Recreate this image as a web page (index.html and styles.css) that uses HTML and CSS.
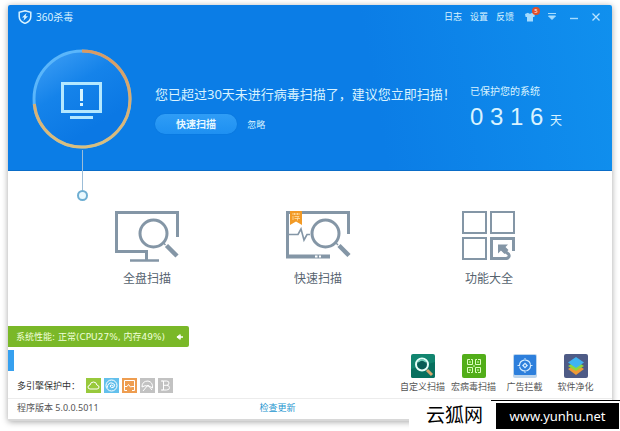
FILE: index.html
```html
<!DOCTYPE html>
<html lang="zh-CN">
  <head>
    <meta charset="UTF-8" />
    <meta name="viewport" content="width=device-width, initial-scale=1.0" />
    <title>360杀毒</title>
    <link rel="stylesheet" href="styles.css">
  </head>
  <body>
    <div class="window">
      <header class="hero">
        <div class="titlebar">
          <svg class="logo" viewBox="0 0 14 14" fill="none">
            <path d="M7 .8 L12.8 2.4 V6.5 C12.8 10 10 12.3 7 13.4 C4 12.3 1.2 10 1.2 6.5 V2.4 Z" stroke="#d9f3ff" stroke-width="1.5" />
            <path d="M8.6 3 L4 7.4 H6.4 L5.4 10.8 L10 6.2 H7.6 Z" fill="#d9f3ff" />
          </svg>
          <h1>360杀毒</h1>
          <nav class="top-links">
            <a href="#">日志</a>
            <a href="#">设置</a>
            <a href="#">反馈</a>
          </nav>
          <div class="win-btns">
            <button aria-label="换肤">
              <svg viewBox="0 0 12 12"><path d="M1 3 L4 1.8 Q6 3.6 8 1.8 L11 3 L10.4 6 H9 V10.5 H3 V6 H1.6 Z" fill="#a5dcff" /></svg>
              <span class="badge">5</span>
            </button>
            <button aria-label="菜单">
              <svg viewBox="0 0 12 12"><path d="M2 2.5 H10 M2.5 5 H9.5 L6 8.5 Z" fill="#a5dcff" stroke="#a5dcff" /></svg>
            </button>
            <button aria-label="最小化">
              <svg viewBox="0 0 12 12"><path d="M2 7.5 H10" stroke="#a5dcff" stroke-width="1.4" /></svg>
            </button>
            <button aria-label="关闭">
              <svg viewBox="0 0 12 12"><path d="M2.5 2.5 L9.5 9.5 M9.5 2.5 L2.5 9.5" stroke="#b9e4ff" stroke-width="1.3" /></svg>
            </button>
          </div>
        </div>

        <div class="status">
          <div class="ring">
            <svg viewBox="0 0 100 100" fill="none">
              <defs>
                <linearGradient id="glass" x1="0.1" y1="0" x2="0.6" y2="0.8">
                  <stop offset="0" stop-color="#3f9ff5" />
                  <stop offset="0.5" stop-color="#1583ea" />
                  <stop offset="1" stop-color="#0b78e4" />
                </linearGradient>
                <linearGradient id="arc" x1="0" y1="0" x2="0" y2="1">
                  <stop offset="0" stop-color="#d99a63" />
                  <stop offset="1" stop-color="#d8bf80" />
                </linearGradient>
              </defs>
              <circle cx="50" cy="50" r="49" fill="url(#glass)" stroke="#0c6cc9" />
              <circle cx="50" cy="50" r="48" stroke="#5ab6fb" stroke-width="3" />
              <path d="M50 2 A48 48 0 1 1 2.3 55" stroke="url(#arc)" stroke-width="3" />
              <rect x="30.5" y="34.5" width="38" height="28" stroke="#b4e8ff" stroke-width="3" />
              <path d="M38 68.5 H61" stroke="#b4e8ff" stroke-width="3" />
              <path d="M49.5 40 V52 M49.5 54 V57" stroke="#d6f4ff" stroke-width="3" />
            </svg>
            <span class="pin"></span>
          </div>

          <div class="message">
            <p>您已超过30天未进行病毒扫描了，建议您立即扫描！</p>
            <button class="scan-btn">快速扫描</button>
            <a class="ignore" href="#">忽略</a>
          </div>

          <div class="days">
            <p>已保护您的系统</p>
            <div class="counter">
              <span>0</span><span>3</span><span>1</span><span>6</span>
              <em>天</em>
            </div>
          </div>
        </div>
      </header>

      <main class="tools">
        <a class="tool" href="#">
          <svg viewBox="0 0 66 54" fill="none" stroke="#8496a6">
            <path d="M63.5 28 V3.5 H2.5 V42.5 H32.5 V51" stroke-width="3" />
            <path d="M16 51.5 H45" stroke-width="2.5" />
            <circle cx="39.5" cy="24.5" r="13.5" stroke-width="3" />
            <path d="M49.5 34 L51.5 36" stroke-width="1.5" />
            <path d="M52.5 36.5 L63 47" stroke-width="4.5" />
          </svg>
          <span>全盘扫描</span>
        </a>
        <a class="tool" href="#">
          <svg viewBox="0 0 66 54" fill="none" stroke="#8496a6">
            <path d="M63.5 25 V3.5 H2.5 V48" stroke-width="3" />
            <path d="M1 47.5 H45" stroke-width="4" />
            <path d="M30 47.5 H32.5 M34 47.5 H36" stroke="#fff" stroke-width="2" />
            <path d="M3 25.5 H13 L16 20 L19 31 L22 25.5 H25" stroke-width="1.6" />
            <circle cx="40.5" cy="24.5" r="13.5" stroke-width="3" />
            <path d="M51 34 L53 36" stroke-width="1.5" />
            <path d="M54 36.5 L64 46.5" stroke-width="4.5" />
            <path d="M5 2 H17 V16 L11 12.5 L5 16 Z" fill="#f29a26" stroke="none" />
            <path d="M7 5 H15 M9.5 4 V6 M12.5 4 V6 M8 7 V11 M9.5 7.5 H14 L12.5 9 V11.5 M9.5 9.5 H15" stroke="#ffe0a8" stroke-width=".8" />
          </svg>
          <span>快速扫描</span>
        </a>
        <a class="tool" href="#">
          <svg viewBox="0 0 66 54" fill="none" stroke="#8496a6">
            <rect x="7" y="3" width="23" height="21" stroke-width="2" />
            <rect x="35" y="3" width="23" height="21" stroke-width="2" />
            <rect x="7" y="29" width="23" height="21" stroke-width="2" />
            <path d="M57.5 42 V29.5 H35.5 V49.5 H51" stroke-width="3" />
            <path d="M46 40 L52.5 45 Q54.5 48 50.5 49.5" stroke-width="3" />
            <path d="M42 35.5 H52 L49.5 38 L52.5 41 L48.5 45 L45 41.5 L42 44.5 Z" fill="#8496a6" stroke="none" />
          </svg>
          <span>功能大全</span>
        </a>
      </main>

      <section class="bottom">
        <div class="left">
          <div class="perf">
            <span>系统性能: 正常(CPU27%, 内存49%)</span>
            <svg viewBox="0 0 8 8"><path d="M1 4 H7 M4 1.5 V6.5" stroke="#fff" stroke-width="1.5" /><path d="M.5 4 L3.5 1.5 V6.5 Z" fill="#fff" /></svg>
          </div>
          <div class="tab"></div>
          <div class="engines">
            <span>多引擎保护中：</span>
            <svg class="green" viewBox="0 0 15 15"><path d="M4 11 Q2 11 2 9 Q2 7.5 4 7 Q4.5 4 7.5 4 Q10.5 4 10.8 7 Q13 7.5 13 9 Q13 11 11 11 Z" /></svg>
            <svg class="blue" viewBox="0 0 15 15"><circle cx="7.5" cy="7.5" r="5.5" /><path d="M3 10 Q4 4 8 5 Q12 6 10 9 Q7 11 6 8 Q7 6 9 8" /></svg>
            <svg class="orange" viewBox="0 0 15 15"><path d="M5 12.5 H2.5 V2.5 H12.5 V12.5 H10 M3 8.5 H5 L6.5 6.5 L8.5 9 L10 8.5 H12" /></svg>
            <svg class="gray" viewBox="0 0 15 15"><path d="M2 9 Q2 3 8 3 Q13 4 12.5 10 Q10 8 8 8 Q5 7 2 9 M8 7 L3 13 M8 7 L12 12" /></svg>
            <svg class="gray" viewBox="0 0 15 15"><path d="M4.5 3 H8.5 Q11 3 11 5 Q11 7.3 8.5 7.3 H5 M8.5 7.3 Q11.5 7.3 11.5 9.7 Q11.5 12 8.5 12 H4.5 M5.5 3 V12 M3 3 H5 M3 12 H5" /></svg>
          </div>
        </div>

        <div class="apps">
          <a href="#">
            <svg viewBox="0 0 24 24" fill="none">
              <rect width="24" height="24" rx="2" fill="#11856f" />
              <path d="M0 15 L24 8 V22 Q24 24 22 24 H2 Q0 24 0 22 Z" fill="#08705f" />
              <path d="M16 16 L21 21" stroke="#d8a56d" stroke-width="3" />
              <circle cx="11" cy="10.5" r="6" fill="#075d55" stroke="#e4fff8" stroke-width="2" />
              <path d="M7 8 Q11 4 15 8" stroke="#75d4bf" stroke-width="1.5" />
            </svg>
            <span>自定义扫描</span>
          </a>
          <a href="#">
            <svg viewBox="0 0 24 24" fill="none">
              <rect width="24" height="24" rx="2" fill="#52ae19" />
              <path d="M8 5.5 H5.5 V10.5 H10.5 V5.5 H9 M16 5.5 H18.5 V10.5 H13.5 V5.5 H15 M8 18.5 H5.5 V13.5 H10.5 V18.5 H9 M16 18.5 H18.5 V13.5 H13.5 V18.5 H15 M8 7 V9 M16 7 V9 M8 15 V17 M16 15 V17 M11 12 H13" stroke="#dcffc0" />
            </svg>
            <span>宏病毒扫描</span>
          </a>
          <a href="#">
            <svg viewBox="0 0 24 24" fill="none">
              <rect width="24" height="24" rx="2" fill="#bdd5ec" />
              <rect x="1" y="1" width="22" height="20" rx="1" fill="#2d7fdc" />
              <circle cx="12" cy="11.5" r="5.5" stroke="#d5edff" stroke-width="1.2" stroke-dasharray="7 1.64" />
              <path d="M12 8.5 L15 11.5 L12 14.5 L9 11.5 Z" fill="#d5edff" />
              <circle cx="12" cy="11.5" r="1" fill="#2d7fdc" />
              <path d="M12 4 V7 M12 16 V19 M4.5 11.5 H7 M17 11.5 H19.5" stroke="#d5edff" />
            </svg>
            <span>广告拦截</span>
          </a>
          <a href="#">
            <svg viewBox="0 0 24 24">
              <rect width="24" height="24" rx="2" fill="#4e5b86" />
              <path d="M12 10 L20 15 L12 21 L4 15 Z" fill="#f09a35" />
              <path d="M12 7 L20 12 L12 17 L4 12 Z" fill="#8fd63c" />
              <path d="M12 3 L20 8.500 L12 14 L4 8.500 Z" fill="#3fb4f2" />
            </svg>
            <span>软件净化</span>
          </a>
        </div>
      </section>

      <footer>
        <span>程序版本 5.0.0.5011</span>
        <a href="#">检查更新</a>
      </footer>
    </div>

    <div class="watermark">
      <strong>云狐网</strong>
      <div class="site"><span>www.yunhu.net</span></div>
    </div>
  </body>
</html>
```
FILE: styles.css
```css
* {
  box-sizing: border-box;
}

body {
  margin: 0;
  padding: 5px 8px 10px;
  min-height: 100vh;
  display: flex;
  background: #fff;
  font-family: "Noto Sans", "Noto Sans CJK SC", sans-serif;
  font-size: 9px;
  line-height: 12px;
  color: #555;
  overflow: hidden;
}

h1,
p {
  margin: 0;
  font-weight: normal;
}

a {
  color: inherit;
  text-decoration: none;
}

button {
  border: none;
  background: none;
  padding: 0;
  font: inherit;
  color: inherit;
  cursor: pointer;
}

svg {
  display: block;
}

.window {
  flex: 1;
  display: flex;
  flex-direction: column;
  background: #fff;
  border-radius: 2px;
  border-bottom: 2px solid #d8d8d8;
  box-shadow: 0 1px 6px rgba(0, 0, 0, 0.35);
}

.hero {
  height: 166px;
  background: linear-gradient(80deg, #0b7de6 60%, #1090ee);
  border-radius: 2px 2px 0 0;
  border-bottom: 1px solid #0a6dc8;
  color: #d9f3ff;
}

.titlebar {
  display: flex;
  align-items: center;
  height: 23px;
  padding: 0 10px;
}

.logo {
  width: 14px;
  height: 14px;
}

h1 {
  margin-left: 4px;
  font-size: 10px;
}

.top-links {
  display: flex;
  gap: 8px;
  margin-left: auto;
}

.win-btns {
  display: flex;
  gap: 10px;
  margin-left: 10px;
}

.win-btns button {
  position: relative;
}

.win-btns svg {
  width: 12px;
  height: 12px;
}

.badge {
  position: absolute;
  top: -4px;
  right: -4px;
  width: 8px;
  height: 8px;
  border-radius: 50%;
  background: #e2502b;
  color: #fff;
  font-size: 6px;
  line-height: 8px;
}

.status {
  display: flex;
  align-items: flex-start;
  padding: 21px 0 0 24px;
}

.ring {
  position: relative;
  width: 100px;
}

.ring::after {
  content: "";
  position: absolute;
  left: 50px;
  top: 101px;
  width: 1px;
  height: 40px;
  background: #9bbdd8;
}

.pin {
  position: absolute;
  left: 45px;
  top: 141px;
  width: 11px;
  height: 11px;
  border: 2px solid #6eaed2;
  border-radius: 50%;
  background: #eaf9ff;
}

.message {
  margin: 36px 0 0 23px;
}

.message p {
  margin-bottom: 11px;
  font-size: 13px;
  line-height: 18px;
  white-space: nowrap;
}

.scan-btn {
  width: 82px;
  height: 20px;
  margin-right: 8px;
  border-radius: 10px;
  background: linear-gradient(#2f9df6, #1e90f2);
  box-shadow: 0 0 1px #0864bd;
  font-size: 10px;
  font-weight: bold;
  color: #e8f8ff;
}

.days {
  margin: 36px 50px 0 auto;
}

.days p {
  font-size: 10px;
}

.counter {
  display: flex;
  align-items: baseline;
  margin-top: 6px;
  line-height: 28px;
}

.counter span {
  width: 20px;
  font-family: "Liberation Sans", sans-serif;
  font-size: 24px;
}

.counter em {
  font-size: 12px;
  font-style: normal;
}

.tools {
  display: flex;
  justify-content: space-between;
  padding: 38px 90px 0 106px;
}

.tool {
  display: flex;
  flex-direction: column;
  align-items: center;
  gap: 7px;
  font-size: 12px;
  line-height: 18px;
  color: #56636f;
}

.tool svg {
  width: 66px;
  height: 54px;
}

.bottom {
  display: flex;
  justify-content: space-between;
  align-items: flex-end;
  margin-top: auto;
  padding-bottom: 5px;
}

.perf {
  display: flex;
  align-items: center;
  justify-content: space-between;
  width: 181px;
  height: 21px;
  padding: 0 5px 0 8px;
  border-radius: 0 2px 2px 0;
  background: #7ab828;
  color: #f0ffd8;
  font-family: "DejaVu Sans", "Noto Sans CJK SC", sans-serif;
}

.perf svg {
  width: 8px;
  height: 8px;
}

.tab {
  width: 6px;
  height: 21px;
  margin: 3px 0 7px;
  background: #36a0ef;
}

.engines {
  display: flex;
  align-items: center;
  gap: 3px;
  padding-left: 9px;
  color: #333;
}

.engines span {
  width: 66px;
  white-space: nowrap;
}

.engines svg {
  width: 15px;
  height: 15px;
  fill: none;
  stroke: #fff;
}

.green {
  background: #98c93c;
}

.blue {
  background: #63c0ec;
}

.orange {
  background: #ee9d50;
}

.gray {
  background: #c2c2c2;
}

.apps {
  display: flex;
  margin-right: 11px;
}

.apps a {
  display: flex;
  flex-direction: column;
  align-items: center;
  gap: 3px;
  width: 51px;
}

.apps svg {
  width: 24px;
  height: 24px;
}

footer {
  display: grid;
  grid-template-columns: 1fr auto 1fr;
  align-items: center;
  height: 21px;
  padding: 0 74px 2px 9px;
  border-top: 1px solid #ececec;
}

footer a {
  color: #2596cf;
}

.watermark {
  position: fixed;
  right: 0;
  bottom: 0;
  display: flex;
  padding-left: 17px;
  background: #fff;
  color: #000;
}

.watermark strong {
  width: 65px;
  font-size: 19px;
  font-weight: normal;
  line-height: 30px;
}

.site {
  padding: 2px 1px 2px 5px;
  border-top: 1px solid #000;
}

.site span {
  display: block;
  width: 123px;
  background: #000;
  color: #fff;
  font-size: 13px;
  line-height: 26px;
  text-align: center;
}
```
